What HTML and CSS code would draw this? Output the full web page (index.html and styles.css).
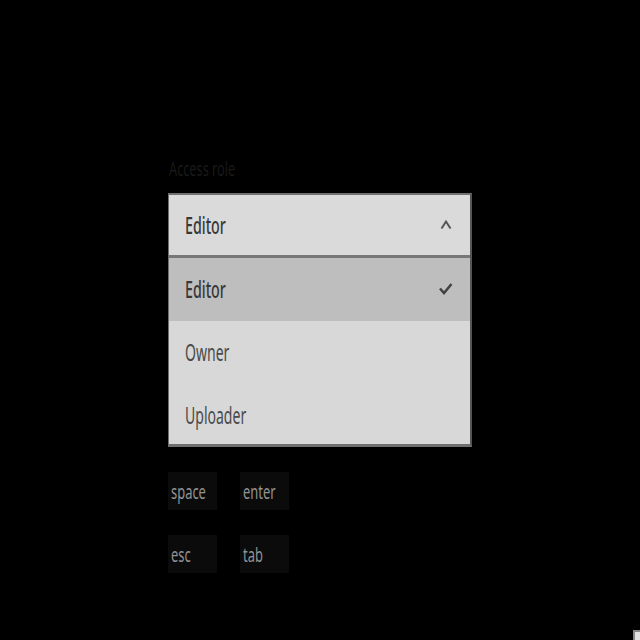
FILE: index.html
```
<!DOCTYPE html>
<html lang="en">
<head>
<meta charset="utf-8">
<title>Access role</title>
<link rel="stylesheet" href="styles.css">
</head>
<body>
<main class="field">
  <div class="label"><span class="text">Access role</span></div>
  <div class="select">
    <div class="trigger">
      <span class="text strong">Editor</span>
      <svg class="icon" viewBox="0 0 16 16"><path d="M3.500 11.500 8 4.500l4.500 7"/></svg>
    </div>
    <div class="options">
      <div class="option selected">
        <span class="text strong">Editor</span>
        <svg class="icon check" viewBox="0 0 16 16"><path d="m2 7.500 4 4.500 7.500-9"/></svg>
      </div>
      <div class="option"><span class="text">Owner</span></div>
      <div class="option"><span class="text">Uploader</span></div>
    </div>
  </div>
  <div class="keys">
    <kbd class="key"><span class="text">space</span></kbd>
    <kbd class="key"><span class="text">enter</span></kbd>
    <kbd class="key"><span class="text">esc</span></kbd>
    <kbd class="key"><span class="text">tab</span></kbd>
  </div>
</main>
<div class="corner"></div>
</body>
</html>
```

FILE: styles.css
```
* { box-sizing: border-box; }
html, body { height: 100%; }
body {
  margin: 0;
  background: #000;
  overflow: hidden;
  font-family: "Noto Sans", "Liberation Sans", sans-serif;
}
.field {
  width: 304px;
  margin: 0 auto;
  padding-top: 156px;
}
.text {
  display: inline-block;
  transform: scaleX(.61);
  transform-origin: left center;
  white-space: nowrap;
}
.label {
  height: 37px;
  padding-left: 1px;
  color: #191919;
  font-size: 19px;
  line-height: 27px;
}
.label .text { transform: scaleX(.67); }
.select {
  height: 254px;
  border: solid #6f6f6f;
  border-width: 2px 1px 3px;
  border-right: 2px solid #555;
  background: #d8d8d8;
  color: #4b4b4b;
  font-size: 23px;
  line-height: 32px;
}
.trigger, .option {
  display: flex;
  align-items: center;
  justify-content: space-between;
  height: 63px;
  padding: 0 16px 2px;
}
.trigger {
  border-bottom: 3px solid #777;
  background: #dadada;
  padding-top: 2px;
}
.selected { background: #bebebe; }
.strong {
  color: #383838;
  font-weight: 500;
  transform: scaleX(.62);
}
.icon {
  width: 16px;
  height: 16px;
  fill: none;
  stroke: #555;
  stroke-width: 2;
}
.check { stroke: #414141; stroke-width: 2.500; }
.keys {
  display: grid;
  grid-template-columns: 49px 49px;
  gap: 25px 23px;
  padding-top: 25px;
}
.key {
  height: 38px;
  padding: 1px 0 0 3px;
  background: #0b0b0b;
  color: #929292;
  font-family: inherit;
  font-size: 19px;
  line-height: 38px;
}
.key .text { transform: scaleX(.68); }
.corner {
  position: absolute;
  right: 0;
  bottom: 0;
  width: 7px;
  height: 10px;
  border: solid #888;
  border-width: 2px 0 0 2px;
  background: #e2e2e2;
}
```
